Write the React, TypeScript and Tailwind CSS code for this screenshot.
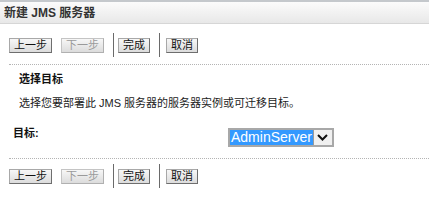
import React from 'react';

const font = { fontFamily: '"Liberation Sans", "Noto Sans CJK SC", sans-serif' };

const Btn: React.FC<{ label: string; disabled?: boolean; className?: string }> = ({ label, disabled, className }) => (
  <button
    disabled={disabled}
    className={`h-[15px] px-[4px] text-[11px] leading-[13px] border border-[#a8a8a8] border-r-[#6e6e6e] border-b-[#6e6e6e] bg-gradient-to-b from-[#f7f7f7] to-[#dcdcdc] ${
      disabled ? 'text-[#9a9a9a] border-[#c4c4c4] border-r-[#b0b0b0] border-b-[#b0b0b0]' : 'text-[#111]'
    } ${className ?? ''}`}
  >
    {label}
  </button>
);

const Sep: React.FC = () => <div className="w-px h-[24px] bg-[#6a6a6a]" />;

const ButtonRow: React.FC = () => (
  <div className="flex items-center h-[24px]">
    <Btn label="上一步" />
    <Btn label="下一步" disabled className="ml-[9px]" />
    <div className="ml-[9px]">
      <Sep />
    </div>
    <Btn label="完成" className="ml-[4px]" />
    <div className="ml-[9px]">
      <Sep />
    </div>
    <Btn label="取消" className="ml-[6px]" />
  </div>
);

export default function App() {
  return (
    <div className="w-[429px] h-[204px] bg-white overflow-hidden" style={font}>
      {/* title bar */}
      <div className="h-[24px] border-t-2 border-[#c4c8cc] border-b border-b-[#d6d6d6] bg-gradient-to-b from-[#fbfbfb] to-[#e8e8e8] flex items-center pl-[4px]">
        <span className="text-[12px] font-bold text-[#333]">新建 JMS 服务器</span>
      </div>

      <div className="pl-[9px]">
        <div className="mt-[9px]">
          <ButtonRow />
        </div>

        <div className="mt-[7px] border-t border-dotted border-[#b4b4b4]" />

        <div className="pl-[10px] pt-[7px]">
          <div className="text-[11px] font-bold text-[#111] leading-[14px]">选择目标</div>
          <div className="mt-[10px] text-[11px] text-[#222] leading-[14px]">
            选择您要部署此 JMS 服务器的服务器实例或可迁移目标。
          </div>
        </div>

        <div className="flex items-start mt-[17px]">
          <div className="w-[219px] pl-[4px] text-[11px] font-bold text-[#111] leading-[14px] mt-[-1px]">目标:</div>
          <div className="flex h-[19px] border-2 border-[#a8a8a8] mt-[1px]">
            <div className="bg-[#3399ff] text-white text-[14px] leading-[15px] px-[1px]">AdminServer</div>
            <div className="w-[19px] bg-[#f0f0f0] border-l border-[#9a9a9a] flex items-center justify-center">
              <svg width="11" height="7" viewBox="0 0 11 7">
                <path d="M1 1 L5.5 5.5 L10 1" fill="none" stroke="#111" strokeWidth="2" />
              </svg>
            </div>
          </div>
        </div>

        <div className="mt-[11px] border-t border-dotted border-[#b4b4b4]" />

        <div className="mt-[5px]">
          <ButtonRow />
        </div>
      </div>
    </div>
  );
}
